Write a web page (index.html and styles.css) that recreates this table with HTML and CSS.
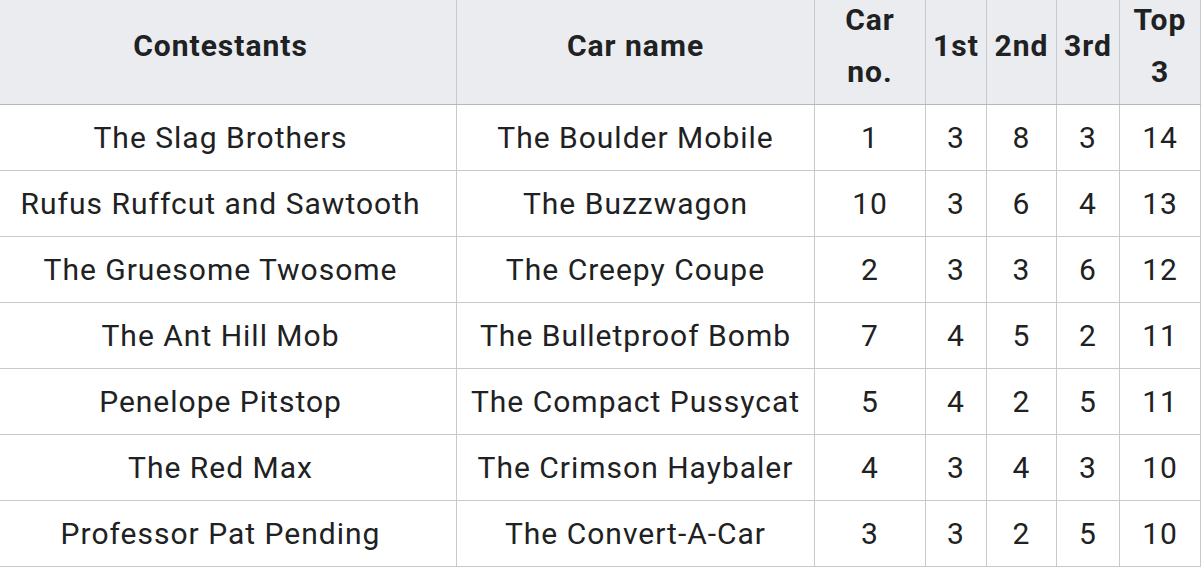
FILE: index.html
```html
<!DOCTYPE html>
<html lang="en">
<head>
<meta charset="utf-8">
<title>Wacky Races standings</title>
<link rel="stylesheet" href="styles.css">
</head>
<body>
<table class="results">
  <colgroup>
    <col class="c-name">
    <col class="c-car">
    <col class="c-no">
    <col class="c-1st">
    <col class="c-2nd">
    <col class="c-3rd">
    <col class="c-top">
  </colgroup>
  <thead>
    <tr>
      <th>Contestants</th>
      <th>Car name</th>
      <th>Car<br>no.</th>
      <th>1st</th>
      <th>2nd</th>
      <th>3rd</th>
      <th>Top<br>3</th>
    </tr>
  </thead>
  <tbody>
    <tr><td>The Slag Brothers</td><td>The Boulder Mobile</td><td>1</td><td>3</td><td>8</td><td>3</td><td>14</td></tr>
    <tr><td>Rufus Ruffcut and Sawtooth</td><td>The Buzzwagon</td><td>10</td><td>3</td><td>6</td><td>4</td><td>13</td></tr>
    <tr><td>The Gruesome Twosome</td><td>The Creepy Coupe</td><td>2</td><td>3</td><td>3</td><td>6</td><td>12</td></tr>
    <tr><td>The Ant Hill Mob</td><td>The Bulletproof Bomb</td><td>7</td><td>4</td><td>5</td><td>2</td><td>11</td></tr>
    <tr><td>Penelope Pitstop</td><td>The Compact Pussycat</td><td>5</td><td>4</td><td>2</td><td>5</td><td>11</td></tr>
    <tr><td>The Red Max</td><td>The Crimson Haybaler</td><td>4</td><td>3</td><td>4</td><td>3</td><td>10</td></tr>
    <tr><td>Professor Pat Pending</td><td>The Convert-A-Car</td><td>3</td><td>3</td><td>2</td><td>5</td><td>10</td></tr>
  </tbody>
</table>
</body>
</html>
```

FILE: styles.css
```css
html, body {
  margin: 0;
  padding: 0;
  background: #ffffff;
}

body {
  font-family: Roboto, "Liberation Sans", Arial, sans-serif;
  color: #202122;
  overflow: hidden;
}

.results {
  border-collapse: collapse;
  table-layout: fixed;
  width: 1216px;
  margin: -13px 0 0 -16px;
  font-size: 30px;
  letter-spacing: 1px;
  line-height: 52px;
}

.c-name { width: 472px; }
.c-car  { width: 358px; }
.c-no   { width: 111px; }
.c-1st  { width: 61px; }
.c-2nd  { width: 70px; }
.c-3rd  { width: 63px; }
.c-top  { width: 81px; }

.results th,
.results td {
  border: 1px solid #c8c9cc;
  text-align: center;
  vertical-align: middle;
  white-space: nowrap;
  padding: 7px 0 6px;
}

.results th {
  background: #eaecf0;
  font-weight: 700;
  padding: 6px 0;
}

.results thead th {
  border-bottom-color: #b4b7bc;
}
```
